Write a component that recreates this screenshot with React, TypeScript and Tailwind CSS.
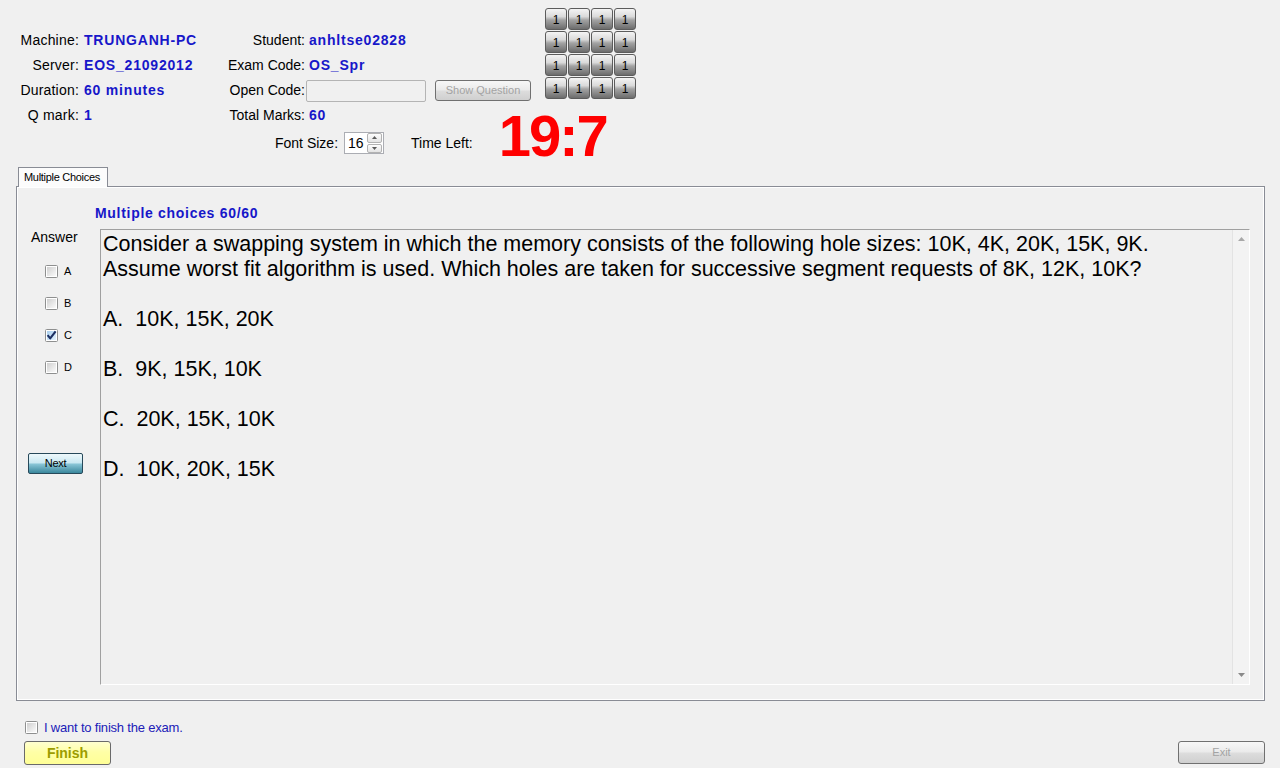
import React from "react"

const infoLeft = [
  { label: "Machine:", value: "TRUNGANH-PC" },
  { label: "Server:", value: "EOS_21092012" },
  { label: "Duration:", value: "60 minutes" },
  { label: "Q mark:", value: "1" },
]

const questionLines = [
  "Consider a swapping system in which the memory consists of the following hole sizes: 10K, 4K, 20K, 15K, 9K.",
  "Assume worst fit algorithm is used. Which holes are taken for successive segment requests of 8K, 12K, 10K?",
  "",
  "A.  10K, 15K, 20K",
  "",
  "B.  9K, 15K, 10K",
  "",
  "C.  20K, 15K, 10K",
  "",
  "D.  10K, 20K, 15K",
]

function CheckBox({ checked = false }: { checked?: boolean }) {
  return (
    <svg width="13" height="13" viewBox="0 0 13 13" className="shrink-0">
      <defs>
        <linearGradient id="cb-off" x1="0" y1="0" x2="1" y2="1">
          <stop offset="0" stopColor="#cfcfcf" />
          <stop offset="1" stopColor="#fbfbfb" />
        </linearGradient>
        <linearGradient id="cb-on" x1="0" y1="0" x2="1" y2="1">
          <stop offset="0" stopColor="#a9cfee" />
          <stop offset="1" stopColor="#e4f2fd" />
        </linearGradient>
      </defs>
      <rect x="0.5" y="0.5" width="12" height="12" rx="1" fill="#fff" stroke="#8e8f8f" />
      <rect x="2" y="2" width="9" height="9" fill={checked ? "url(#cb-on)" : "url(#cb-off)"} />
      {checked && (
        <path d="M2.6 6.2 L5.2 9.4 L10.6 2.4" fill="none" stroke="#1c2f63" strokeWidth="2.1" strokeLinejoin="round" />
      )}
    </svg>
  )
}

function NumButton() {
  return (
    <div className="w-[22px] h-[22px] rounded-[3px] border border-[#5c5c5c] bg-[linear-gradient(to_bottom,#f4f4f4_0%,#dadada_38%,#a3a3a3_55%,#6c6c6c_100%)] flex items-center justify-center text-[12px] leading-none text-black pt-[1px]">
      1
    </div>
  )
}

export default function App() {
  return (
    <div className="w-[1280px] h-[768px] overflow-hidden bg-[#f0f0f0] font-['Liberation_Sans',Arial,sans-serif] text-black flex flex-col">
      {/* header */}
      <div className="h-[165px] flex shrink-0">
        <div className="w-[545px] shrink-0 flex flex-col">
          <div className="flex pt-[28px]">
            <div className="w-[220px] shrink-0 grid grid-cols-[79px_auto] gap-x-[5px] auto-rows-[25px] items-center text-[14px] whitespace-nowrap">
              {infoLeft.map((r) => (
                <React.Fragment key={r.label}>
                  <span className="text-right tracking-[0.2px]">{r.label}</span>
                  <span className="font-bold text-[#1717c9] tracking-[0.8px]">{r.value}</span>
                </React.Fragment>
              ))}
            </div>
            <div className="grid grid-cols-[85px_auto] gap-x-[4px] auto-rows-[25px] items-center text-[14px] whitespace-nowrap">
              <span className="text-right">Student:</span>
              <span className="font-bold text-[#1717c9] tracking-[0.8px]">anhltse02828</span>
              <span className="text-right">Exam Code:</span>
              <span className="font-bold text-[#1717c9] tracking-[0.8px]">OS_Spr</span>
              <span className="text-right">Open Code:</span>
              <div className="flex items-center -ml-[3px]">
                <div className="w-[120px] h-[22px] border border-[#b4b4b4] rounded-[2px] bg-[#f0f0f0]" />
                <div className="ml-[9px] w-[96px] h-[21px] rounded-[3px] border border-[#707070] bg-[linear-gradient(to_bottom,#f7f7f7_0%,#ebebeb_45%,#dcdcdc_55%,#cfcfcf_100%)] flex items-center justify-center text-[11px] text-[#a3a3a3]">
                  Show Question
                </div>
              </div>
              <span className="text-right">Total Marks:</span>
              <span className="font-bold text-[#1717c9] tracking-[0.8px]">60</span>
            </div>
          </div>
          <div className="mt-[4px] h-[22px] flex items-center pl-[275px] text-[14px] whitespace-nowrap">
            <span className="shrink-0">Font Size:</span>
            <div className="shrink-0 ml-[6px] w-[40px] h-[22px] border border-[#abadb3] bg-white flex items-center">
              <span className="pl-[3px] flex-1">16</span>
              <div className="w-[16px] h-[20px] flex flex-col gap-[1px] pr-[1px]">
                <div className="flex-1 border border-[#b2b2b2] rounded-[2px] bg-[linear-gradient(to_bottom,#fdfdfd,#e3e3e3)] flex items-center justify-center">
                  <svg width="5" height="3" viewBox="0 0 5 3"><path d="M0 3 L2.5 0 L5 3Z" fill="#5a5a5a" /></svg>
                </div>
                <div className="flex-1 border border-[#b2b2b2] rounded-[2px] bg-[linear-gradient(to_bottom,#fdfdfd,#e3e3e3)] flex items-center justify-center">
                  <svg width="5" height="3" viewBox="0 0 5 3"><path d="M0 0 L2.5 3 L5 0Z" fill="#5a5a5a" /></svg>
                </div>
              </div>
            </div>
            <span className="shrink-0 ml-[27px]">Time Left:</span>
            <span className="shrink-0 ml-[26px] self-start -mt-[25px] text-[58px] leading-none font-bold text-[#ff0000] tracking-[-2px]">
              19:7
            </span>
          </div>
        </div>
        <div className="mt-[8px] grid grid-cols-4 gap-[1px] h-fit">
          {Array.from({ length: 16 }).map((_, i) => (
            <NumButton key={i} />
          ))}
        </div>
      </div>

      {/* tab control */}
      <div className="mt-[2px] ml-[16px] w-[1249px] flex flex-col">
        <div className="ml-[2px] w-[90px] h-[20px] relative z-10 -mb-[1px] border border-b-0 border-[#898c95] bg-[#fcfcfc] flex items-center pl-[5px] text-[11px] tracking-[-0.3px] whitespace-nowrap">
          Multiple Choices
        </div>
        <div className="h-[515px] border border-[#898c95] bg-[#f0f0f0] shadow-[inset_1px_1px_0_#ffffff,inset_-1px_-1px_0_#ffffff] flex flex-col">
          <div className="mt-[18px] pl-[78px] h-[16px] text-[14px] leading-[16px] font-bold text-[#1717c9] tracking-[0.7px]">
            Multiple choices 60/60
          </div>
          <div className="mt-[8px] flex h-[456px]">
            <div className="w-[83px] shrink-0 flex flex-col text-[14px]">
              <div className="pl-[14px] h-[16px] leading-[16px]">Answer</div>
              <div className="mt-[20px] flex flex-col gap-[19px] pl-[28px]">
                {["A", "B", "C", "D"].map((l) => (
                  <div key={l} className="h-[13px] flex items-center gap-[6px] text-[11px]">
                    <CheckBox checked={l === "C"} />
                    <span>{l}</span>
                  </div>
                ))}
              </div>
              <div className="mt-[79px] ml-[11px] w-[55px] h-[21px] rounded-[2px] border border-[#27495a] bg-[linear-gradient(to_bottom,#eef8fb_0%,#cbe9f2_45%,#86c3d4_55%,#3a879c_100%)] flex items-center justify-center text-[11px] tracking-[-0.3px]">
                Next
              </div>
            </div>
            <div className="flex-1 mr-[14px] border border-t-[#a0a0a0] border-l-[#a0a0a0] border-r-white border-b-white flex min-w-0">
              <div className="flex-1 min-w-0 overflow-hidden pl-[2px] pt-[2px] text-[21.5px] leading-[25px] whitespace-pre">
                {questionLines.map((l, i) => (
                  <div key={i} className="h-[25px]">{l}</div>
                ))}
              </div>
              <div className="w-[17px] shrink-0 border-l border-[#e3e3e3] bg-[#f3f3f3] flex flex-col justify-between items-center py-[7px]">
                <svg width="7" height="4" viewBox="0 0 7 4"><path d="M0 4 L3.5 0 L7 4Z" fill="#a8a8a8" /></svg>
                <svg width="7" height="4" viewBox="0 0 7 4"><path d="M0 0 L3.5 4 L7 0Z" fill="#8a8a8a" /></svg>
              </div>
            </div>
          </div>
        </div>
      </div>

      {/* bottom */}
      <div className="mt-[20px] pl-[25px] h-[13px] flex items-center gap-[6px]">
        <CheckBox />
        <span className="text-[13px] text-[#2020b8] tracking-[-0.2px]">I want to finish the exam.</span>
      </div>
      <div className="mt-[7px] pl-[24px] pr-[15px] flex justify-between items-start">
        <div className="w-[87px] h-[24px] rounded-[3px] border border-[#6a6a6a] bg-[linear-gradient(to_bottom,#ffffd0_0%,#ffffa6_45%,#ffff96_100%)] flex items-center justify-center text-[14px] font-bold text-[#9c9c00]">
          Finish
        </div>
        <div className="w-[87px] h-[23px] rounded-[3px] border border-[#707070] bg-[linear-gradient(to_bottom,#f7f7f7_0%,#ebebeb_45%,#dcdcdc_55%,#cfcfcf_100%)] flex items-center justify-center text-[11px] text-[#a3a3a3]">
          Exit
        </div>
      </div>
    </div>
  )
}
